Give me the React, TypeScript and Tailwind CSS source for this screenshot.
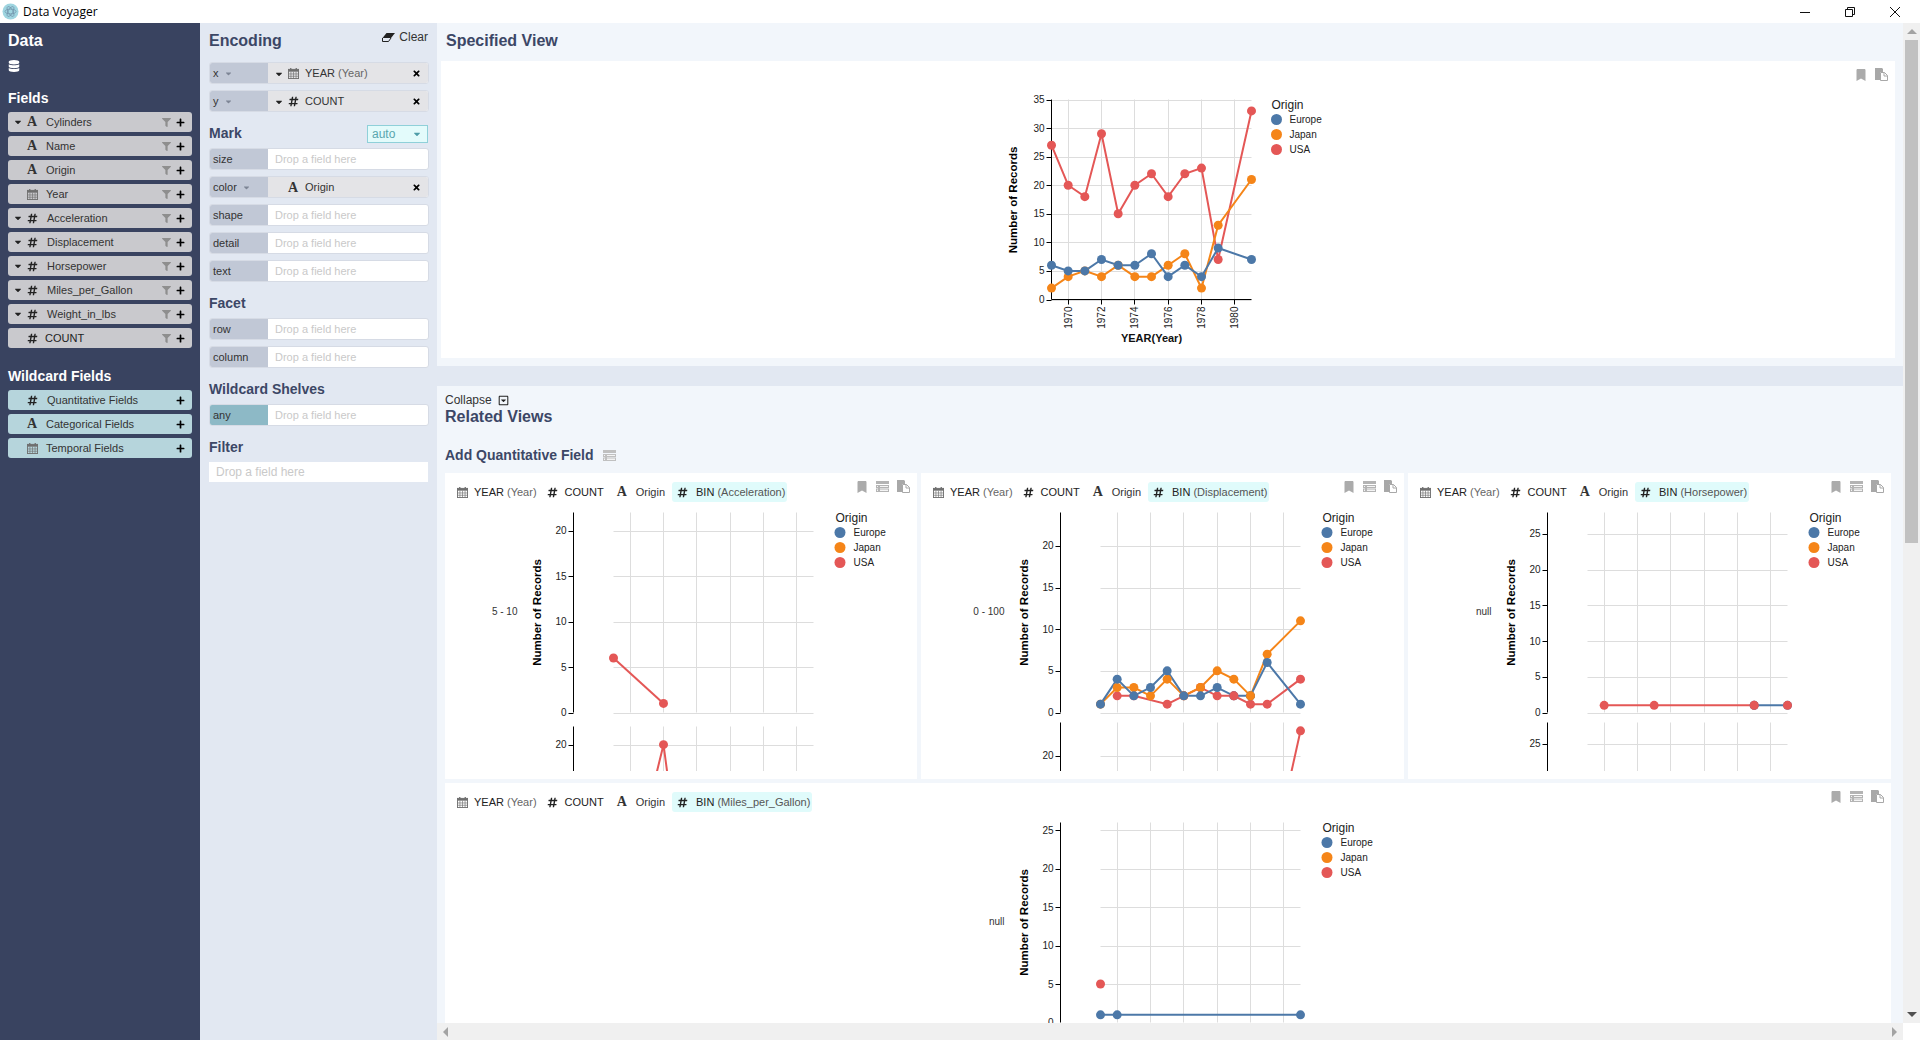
import type { ReactNode } from 'react'
import {
  FaBookmark,
  FaCaretDown,
  FaDatabase,
  FaFilter,
  FaHashtag,
  FaPlus,
  FaRegCaretSquareDown,
  FaTimes,
} from 'react-icons/fa'

const EUROPE = '#4c78a8'
const JAPAN = '#f58518'
const USA = '#e45756'

type Kind = 'text' | 'number' | 'time'
type Pt = [number, number]
type Series = { color: string; pts: Pt[] }

const seq = (vals: number[]): Pt[] => vals.map((v, i) => [i === 11 ? 12 : i, v])

function CalendarIcon({ size = 11, color = '#6f6f6f' }: { size?: number; color?: string }) {
  return (
    <svg width={size} height={size} viewBox="0 0 12 12">
      <rect x="0.5" y="1.5" width="11" height="10" fill="none" stroke={color} />
      <rect x="0.5" y="1.5" width="11" height="2.5" fill={color} />
      <path d="M3 0v3M9 0v3" stroke={color} strokeWidth="1.4" />
      <path d="M0.5 6.5h11M0.5 9h11M3.2 4v7.5M6 4v7.5M8.8 4v7.5" stroke={color} strokeWidth="0.7" />
    </svg>
  )
}

function TypeIcon({ kind }: { kind: Kind }) {
  if (kind === 'text') {
    return <span className="font-['Liberation_Serif',serif] text-[14px] leading-none font-bold text-[#333]">A</span>
  }
  if (kind === 'number') return <FaHashtag className="text-[11px] text-[#222]" />
  return <CalendarIcon />
}

function CopyIcon() {
  return (
    <svg width="13" height="13" viewBox="0 0 13 13">
      <path d="M0 0h7l1 1v3H5v8H0z" fill="#a8a8a8" />
      <path d="M5.5 4.5h4l3 3v5h-7z" fill="#fff" stroke="#a8a8a8" />
      <path d="M9 4.5v3.5h3.5" fill="none" stroke="#a8a8a8" />
    </svg>
  )
}

function ListIcon({ color = '#b4b4b4' }: { color?: string }) {
  return (
    <svg width="13" height="11" viewBox="0 0 13 11">
      <rect x="0" y="0" width="13" height="3" fill={color} />
      <rect x="0.5" y="4.5" width="12" height="2" fill="#f4f4f4" stroke={color} />
      <rect x="0.5" y="8" width="12" height="2.5" fill="#f4f4f4" stroke={color} />
      <rect x="2" y="4" width="2" height="7" fill={color} />
    </svg>
  )
}

function EraserIcon() {
  return (
    <svg width="13" height="9" viewBox="0 0 13 9">
      <path d="M4.5 0H13L9 5H0.5z" fill="#222" />
      <path d="M0.5 5L0.5 8.5H6.5L9 5" fill="none" stroke="#222" />
    </svg>
  )
}

function FieldPill({ name, kind, caret, wildcard }: { name: string; kind: Kind; caret?: boolean; wildcard?: boolean }) {
  const gap = name === 'COUNT' ? 'ml-[5px] text-[#222]' : kind === 'number' ? 'ml-[7px]' : 'ml-[6px]'
  return (
    <div
      className={`flex h-5 items-center rounded-[3px] pr-[6px] pl-[6px] text-[11px] text-[#333] ${
        wildcard ? 'bg-[#b6d5dc]' : 'bg-[#c9c9cd]'
      }`}
    >
      <span className="flex w-2 justify-center">{caret && <FaCaretDown className="text-[10px] text-[#222]" />}</span>
      <span className="ml-[2px] flex w-4 justify-center">
        <TypeIcon kind={kind} />
      </span>
      <span className={gap}>{name}</span>
      <span className="flex-1" />
      {!wildcard && (
        <span className="flex w-3 justify-center">
          <FaFilter className="text-[9px] text-[#8e8e8e]" />
        </span>
      )}
      <span className="ml-[2px] flex w-3 justify-center">
        <FaPlus className="text-[9px] text-black" />
      </span>
    </div>
  )
}

function Shelf({ label, caret, any, children }: { label: string; caret?: boolean; any?: boolean; children?: ReactNode }) {
  return (
    <div className="flex h-[22px] w-[220px] overflow-hidden rounded-[3px] border border-[#d6dbe5] bg-white text-[11px]">
      <div
        className={`flex w-[58px] shrink-0 items-center pl-[3px] text-[#333] ${any ? 'bg-[#8db9c6]' : 'bg-[#c1c8d6]'}`}
      >
        {label}
        {caret && <FaCaretDown className="ml-[5px] text-[9px] text-[#7d8595]" />}
      </div>
      {children ?? <div className="flex items-center pl-[7px] text-[#c9c9c9]">Drop a field here</div>}
    </div>
  )
}

function ShelfChip({ kind, caret, name, sub }: { kind: Kind; caret?: boolean; name: string; sub?: string }) {
  return (
    <div className="flex flex-1 items-center bg-[#e4e4e7] pt-[1px] pr-[7px] pl-[7px] text-[#333]">
      <span className="flex w-2 justify-center">{caret && <FaCaretDown className="text-[10px] text-[#222]" />}</span>
      <span className="ml-[2px] flex w-4 justify-center">
        <TypeIcon kind={kind} />
      </span>
      <span className="ml-[4px]">
        {name}
        {sub && <span className="text-[#666]"> {sub}</span>}
      </span>
      <span className="flex-1" />
      <FaTimes className="text-[9px] text-black" />
    </div>
  )
}

function Heading({ children, className }: { children: ReactNode; className?: string }) {
  return <div className={`flex h-5 items-center text-[14px] font-bold text-[#3c4766] ${className ?? ''}`}>{children}</div>
}

function Facet({
  left,
  top,
  max,
  axisX,
  series = [],
  overlay = [],
  xAxis,
  clipY,
}: {
  left: number
  top: number
  max: number
  axisX: number
  series?: Series[]
  overlay?: { color: string; pt: Pt }[]
  xAxis?: boolean
  clipY?: number
}) {
  const px = (i: number) => left + (i * 200) / 12
  const py = (v: number) => top + 200 - (v * 200) / max
  const ticks: number[] = []
  for (let v = 0; v <= max; v += 5) {
    // the lower facet is cut by the scroll box, its hidden ticks are left out
    if (clipY === undefined || py(v) + 4 < clipY) ticks.push(v)
  }
  return (
    <g>
      {[17, 50, 83, 117, 150, 183].map((d) => (
        <line key={d} x1={left + d} x2={left + d} y1={top} y2={top + 200} stroke="#ddd" />
      ))}
      {ticks.map((v) => (
        <line key={v} x1={left} x2={left + 200} y1={Math.round(py(v)) + 0.5} y2={Math.round(py(v)) + 0.5} stroke="#ddd" />
      ))}
      <line x1={axisX} x2={axisX} y1={top} y2={top + 200} stroke="#000" />
      {ticks.map((v) => (
        <g key={v}>
          <line x1={axisX - 5} x2={axisX} y1={Math.round(py(v)) + 0.5} y2={Math.round(py(v)) + 0.5} stroke="#000" />
          <text x={axisX - 7} y={py(v) + 3.5} fontSize="10" textAnchor="end" fill="#222">
            {v}
          </text>
        </g>
      ))}
      {xAxis && (
        <g>
          <line x1={left} x2={left + 200} y1={top + 200} y2={top + 200} stroke="#000" />
          {[17, 50, 83, 117, 150, 183].map((d, i) => (
            <g key={d}>
              <line x1={left + d} x2={left + d} y1={top + 200} y2={top + 205} stroke="#000" />
              <text
                transform={`translate(${left + d + 3.5},${top + 207}) rotate(-90)`}
                fontSize="10"
                textAnchor="end"
                fill="#222"
              >
                {1970 + i * 2}
              </text>
            </g>
          ))}
          <text x={left + 100} y={top + 242} fontSize="11" fontWeight="bold" textAnchor="middle" fill="#111">
            YEAR(Year)
          </text>
        </g>
      )}
      {series.map((s, i) => (
        <polyline
          key={i}
          points={s.pts.map(([x, v]) => `${px(x)},${py(v)}`).join(' ')}
          fill="none"
          stroke={s.color}
          strokeWidth="2"
        />
      ))}
      {series.map((s, i) =>
        s.pts.map(([x, v]) => <circle key={`${i}-${x}`} cx={px(x)} cy={py(v)} r="4.5" fill={s.color} />),
      )}
      {overlay.map((o, i) => (
        <circle key={i} cx={px(o.pt[0])} cy={py(o.pt[1])} r="4.5" fill={o.color} />
      ))}
    </g>
  )
}

function Legend({
  x,
  y,
  title = 22,
  dot = 26.5,
  label = 40,
}: {
  x: number
  y: number
  title?: number
  dot?: number
  label?: number
}) {
  const items: [string, string][] = [
    ['Europe', EUROPE],
    ['Japan', JAPAN],
    ['USA', USA],
  ]
  return (
    <g>
      <text x={x + title} y={y + 9} fontSize="12" fill="#222">
        Origin
      </text>
      {items.map(([name, color], i) => (
        <g key={name}>
          <circle cx={x + dot} cy={y + 20 + i * 15} r="5.5" fill={color} />
          <text x={x + label} y={y + 23.5 + i * 15} fontSize="10" fill="#222">
            {name}
          </text>
        </g>
      ))}
    </g>
  )
}

function YTitle({ x, y }: { x: number; y: number }) {
  return (
    <text transform={`translate(${x},${y}) rotate(-90)`} fontSize="11.5" fontWeight="bold" textAnchor="middle" fill="#000">
      Number of Records
    </text>
  )
}

function RelatedChart({
  height,
  axisX,
  max,
  rowLabel,
  series,
  overlay,
  second,
}: {
  height: number
  axisX: number
  max: number
  rowLabel: string
  series: Series[]
  overlay?: { color: string; pt: Pt }[]
  second?: { top: number; series?: Series[] }
}) {
  const left = axisX + 40
  return (
    <svg className="block w-full" height={height}>
      <text x={axisX - 56} y={106} fontSize="10" textAnchor="end" fill="#333">
        {rowLabel}
      </text>
      <YTitle x={axisX - 33} y={103.5} />
      <Facet left={left} top={3.5} max={max} axisX={axisX} series={series} overlay={overlay} />
      {second && <Facet left={left} top={second.top} max={max} axisX={axisX} series={second.series} clipY={height} />}
      <Legend x={left + 200} y={3.5} />
    </svg>
  )
}

function ChipRow({ bin }: { bin: string }) {
  return (
    <div className="flex h-9 items-center pt-[2px] pl-[7px] text-[11px] text-[#222]">
      <span className="flex items-center">
        <span className="flex w-5 justify-center">
          <CalendarIcon />
        </span>
        <span className="ml-[2px]">
          YEAR <span className="text-[#666]">(Year)</span>
        </span>
      </span>
      <span className="ml-[6px] flex items-center">
        <span className="flex w-5 justify-center">
          <FaHashtag className="text-[11px] text-[#222]" />
        </span>
        <span className="ml-[2px]">COUNT</span>
      </span>
      <span className="ml-2 flex items-center">
        <span className="flex w-5 justify-center">
          <TypeIcon kind="text" />
        </span>
        <span className="ml-[4px] text-[#333]">Origin</span>
      </span>
      <span className="ml-[7px] flex h-5 items-center rounded-[3px] bg-[#e0fbfb] pr-[2px]">
        <span className="flex w-5 justify-center">
          <FaHashtag className="text-[11px] text-[#222]" />
        </span>
        <span className="ml-[4px]">
          BIN <span className="text-[#555]">({bin})</span>
        </span>
      </span>
    </div>
  )
}

function CardActions({ list = true }: { list?: boolean }) {
  return (
    <div className="absolute top-[7px] right-[7px] flex items-center gap-[8px]">
      <FaBookmark className="text-[12px] text-[#ababab]" />
      {list && <ListIcon />}
      <CopyIcon />
    </div>
  )
}

function RelatedCard({ bin, children }: { bin: string; children: ReactNode }) {
  return (
    <div className="relative h-[306px] shrink-0 overflow-hidden bg-white">
      <ChipRow bin={bin} />
      <CardActions />
      {children}
    </div>
  )
}

export default function App() {
  const fields: { name: string; kind: Kind; caret?: boolean }[] = [
    { name: 'Cylinders', kind: 'text', caret: true },
    { name: 'Name', kind: 'text' },
    { name: 'Origin', kind: 'text' },
    { name: 'Year', kind: 'time' },
    { name: 'Acceleration', kind: 'number', caret: true },
    { name: 'Displacement', kind: 'number', caret: true },
    { name: 'Horsepower', kind: 'number', caret: true },
    { name: 'Miles_per_Gallon', kind: 'number', caret: true },
    { name: 'Weight_in_lbs', kind: 'number', caret: true },
    { name: 'COUNT', kind: 'number' },
  ]

  const topSeries: Series[] = [
    { color: USA, pts: seq([27, 20, 18, 29, 15, 20, 22, 18, 22, 23, 7, 33]) },
    { color: JAPAN, pts: seq([2, 4, 5, 4, 6, 4, 4, 6, 8, 2, 13, 21]) },
    { color: EUROPE, pts: seq([6, 5, 5, 7, 6, 6, 8, 4, 6, 4, 9, 7]) },
  ]

  const displacement: Series[] = [
    {
      color: USA,
      pts: [[1, 2], [2, 2], [4, 1], [5, 2], [6, 3], [7, 2], [8, 2], [9, 1], [10, 1], [12, 4]],
    },
    { color: JAPAN, pts: seq([1, 3, 3, 2, 4, 2, 3, 5, 4, 2, 7, 11]) },
    { color: EUROPE, pts: seq([1, 4, 2, 3, 5, 2, 2, 3, 2, 2, 6, 1]) },
  ]

  return (
    <div className="flex h-[1040px] w-[1920px] flex-col overflow-hidden bg-white font-['Liberation_Sans',Arial,sans-serif]">
      <header className="flex h-[23px] shrink-0 items-center bg-white">
        <svg className="ml-[2px]" width="17" height="17" viewBox="0 0 17 17">
          <circle cx="8.5" cy="8.5" r="8" fill="#9fd5e0" />
          <g fill="none" stroke="#6f8fa8" strokeWidth="0.7">
            <ellipse cx="8.5" cy="8.5" rx="5.5" ry="2.4" />
            <ellipse cx="8.5" cy="8.5" rx="5.5" ry="2.4" transform="rotate(60 8.5 8.5)" />
            <ellipse cx="8.5" cy="8.5" rx="5.5" ry="2.4" transform="rotate(120 8.5 8.5)" />
          </g>
        </svg>
        <span className="ml-[4px] font-['Open_Sans',sans-serif] text-[12px] text-black">Data Voyager</span>
        <div className="ml-auto mr-[3px] flex">
          <span className="flex w-[45px] justify-center">
            <svg width="10" height="10" viewBox="0 0 10 10">
              <path d="M0 5.5h10" stroke="#111" />
            </svg>
          </span>
          <span className="flex w-[45px] justify-center">
            <svg width="10" height="10" viewBox="0 0 10 10">
              <path d="M0.5 2.5h7v7h-7zM2.5 2.5v-2h7v7h-2" fill="none" stroke="#111" />
            </svg>
          </span>
          <span className="flex w-[45px] justify-center">
            <svg width="10" height="10" viewBox="0 0 10 10">
              <path d="M0 0l10 10M10 0L0 10" stroke="#111" />
            </svg>
          </span>
        </div>
      </header>

      <div className="flex min-h-0 flex-1">
        <aside className="w-[200px] shrink-0 bg-[#394360] px-2">
          <div className="flex h-[34px] items-center pt-[2px] text-[16px] font-bold text-white">Data</div>
          <FaDatabase className="mt-[3px] text-[12px] text-white" />
          <div className="mt-4 flex h-5 items-center text-[14px] font-bold text-white">Fields</div>
          <div className="mt-1 flex flex-col gap-1">
            {fields.map((f) => (
              <FieldPill key={f.name} {...f} />
            ))}
          </div>
          <div className="mt-[18px] flex h-5 items-center text-[14px] font-bold text-white">Wildcard Fields</div>
          <div className="mt-1 flex flex-col gap-1">
            <FieldPill name="Quantitative Fields" kind="number" wildcard />
            <FieldPill name="Categorical Fields" kind="text" wildcard />
            <FieldPill name="Temporal Fields" kind="time" wildcard />
          </div>
        </aside>

        <section className="w-[237px] shrink-0 bg-[#e2e8f2] pl-[9px]">
          <div className="flex h-[34px] w-[219px] items-center justify-between pt-[2px]">
            <span className="text-[16px] font-bold text-[#3c4766]">Encoding</span>
            <span className="-mt-2 flex items-center gap-[4px] text-[12px] text-[#333]">
              <EraserIcon />
              Clear
            </span>
          </div>
          <div className="mt-[5px] flex flex-col gap-[6px]">
            <Shelf label="x" caret>
              <ShelfChip kind="time" caret name="YEAR" sub="(Year)" />
            </Shelf>
            <Shelf label="y" caret>
              <ShelfChip kind="number" caret name="COUNT" />
            </Shelf>
          </div>
          <div className="mt-3 flex h-5 w-[219px] items-center justify-between">
            <Heading className="pb-[2px]">Mark</Heading>
            <div className="flex h-[18px] w-[61px] items-center justify-between border border-[#8fd0d9] bg-[#e3fbfb] pr-[5px] pl-[4px] text-[12px] text-[#5aa6ae]">
              auto
              <FaCaretDown className="text-[10px] text-[#4f9da8]" />
            </div>
          </div>
          <div className="mt-1 flex flex-col gap-[6px]">
            <Shelf label="size" />
            <Shelf label="color" caret>
              <ShelfChip kind="text" name="Origin" />
            </Shelf>
            <Shelf label="shape" />
            <Shelf label="detail" />
            <Shelf label="text" />
          </div>
          <Heading className="mt-[11px]">Facet</Heading>
          <div className="mt-[5px] flex flex-col gap-[6px]">
            <Shelf label="row" />
            <Shelf label="column" />
          </div>
          <Heading className="mt-[11px]">Wildcard Shelves</Heading>
          <div className="mt-[5px]">
            <Shelf label="any" any />
          </div>
          <Heading className="mt-[11px]">Filter</Heading>
          <div className="mt-[5px] flex h-5 w-[219px] items-center bg-white pl-[7px] text-[12px] text-[#c9c9c9]">
            Drop a field here
          </div>
        </section>

        <div className="flex min-w-0 flex-1 flex-col">
          <div className="flex min-h-0 flex-1">
            <main className="flex min-w-0 flex-1 flex-col bg-[#f2f6fb]">
              <div className="h-[343px] shrink-0">
                <div className="flex h-[38px] items-center pb-[2px] pl-[9px] text-[16px] font-bold text-[#3c4766]">
                  Specified View
                </div>
                <div className="relative mr-2 ml-1 h-[297px] bg-white">
                  <CardActions list={false} />
                  <svg className="block" width="100%" height="297">
                    <YTitle x={576} y={139} />
                    <Facet left={610.5} top={38.5} max={35} axisX={610.5} series={topSeries} xAxis />
                    <Legend x={810.5} y={38.5} title={20} dot={25} label={38} />
                  </svg>
                </div>
              </div>
              <div className="h-5 shrink-0 bg-[#e2e8f2]" />
              <div className="min-h-0 flex-1 overflow-hidden pt-[7px] pl-2">
                <div className="flex h-[14px] items-center text-[12px] text-[#333]">
                  Collapse
                  <FaRegCaretSquareDown className="ml-[6px] text-[11px] text-[#222]" />
                </div>
                <div className="flex h-[18px] items-center pt-[2px] text-[16px] font-bold text-[#3c4766]">
                  Related Views
                </div>
                <div className="mt-[21px] flex h-[18px] items-center text-[14px] font-bold text-[#3c4766]">
                  Add Quantitative Field
                  <span className="ml-[9px]">
                    <ListIcon color="#c0c0c0" />
                  </span>
                </div>
                <div className="mt-[9px] mr-3 grid grid-cols-[472px_483px_483px] gap-1">
                  <RelatedCard bin="Acceleration">
                    <RelatedChart
                      height={262}
                      axisX={128.5}
                      max={22}
                      rowLabel="5 - 10"
                      series={[
                        {
                          color: USA,
                          pts: [
                            [0, 6],
                            [3, 1],
                          ],
                        },
                      ]}
                      second={{
                        top: 217.5,
                        series: [
                          {
                            color: USA,
                            pts: [
                              [1, 5],
                              [3, 20],
                              [4.1, 5],
                            ],
                          },
                        ],
                      }}
                    />
                  </RelatedCard>
                  <RelatedCard bin="Displacement">
                    <RelatedChart
                      height={262}
                      axisX={139.5}
                      max={24}
                      rowLabel="0 - 100"
                      series={displacement}
                      overlay={[
                        { color: USA, pt: [8, 2] },
                        { color: JAPAN, pt: [9, 2] },
                      ]}
                      second={{
                        top: 213.5,
                        series: [
                          {
                            color: USA,
                            pts: [
                              [10, 5],
                              [12, 23],
                            ],
                          },
                        ],
                      }}
                    />
                  </RelatedCard>
                  <RelatedCard bin="Horsepower">
                    <RelatedChart
                      height={262}
                      axisX={139.5}
                      max={28}
                      rowLabel="null"
                      series={[
                        {
                          color: USA,
                          pts: [
                            [1, 1],
                            [4, 1],
                            [10, 1],
                          ],
                        },
                        {
                          color: EUROPE,
                          pts: [
                            [10, 1],
                            [12, 1],
                          ],
                        },
                      ]}
                      overlay={[
                        { color: USA, pt: [10, 1] },
                        { color: USA, pt: [12, 1] },
                      ]}
                      second={{ top: 213.5 }}
                    />
                  </RelatedCard>
                  <div className="col-span-3">
                    <RelatedCard bin="Miles_per_Gallon">
                      <RelatedChart
                        height={204}
                        axisX={615.5}
                        max={26}
                        rowLabel="null"
                        series={[
                          {
                            color: USA,
                            pts: [[0, 5]],
                          },
                          {
                            color: EUROPE,
                            pts: [
                              [0, 1],
                              [1, 1],
                              [12, 1],
                            ],
                          },
                        ]}
                      />
                    </RelatedCard>
                  </div>
                </div>
              </div>
            </main>
            <div className="flex w-[17px] shrink-0 flex-col items-center bg-[#f0f0f0]">
              <div className="flex h-[17px] items-center justify-center">
                <div className="border-x-[5px] border-b-[5px] border-x-transparent border-b-[#a3a3a3]" />
              </div>
              <div className="h-[503px] w-[13px] bg-[#c1c1c1]" />
              <div className="flex-1" />
              <div className="flex h-[17px] items-center justify-center">
                <div className="border-x-[5px] border-t-[5px] border-x-transparent border-t-[#505050]" />
              </div>
            </div>
          </div>
          <div className="flex h-[17px] shrink-0">
            <div className="flex flex-1 items-center justify-between bg-[#f0f0f0]">
              <div className="flex w-[17px] justify-center">
                <div className="border-y-[5px] border-r-[5px] border-y-transparent border-r-[#a3a3a3]" />
              </div>
              <div className="flex w-[17px] justify-center">
                <div className="border-y-[5px] border-l-[5px] border-y-transparent border-l-[#a3a3a3]" />
              </div>
            </div>
            <div className="w-[17px] bg-white" />
          </div>
        </div>
      </div>
    </div>
  )
}
